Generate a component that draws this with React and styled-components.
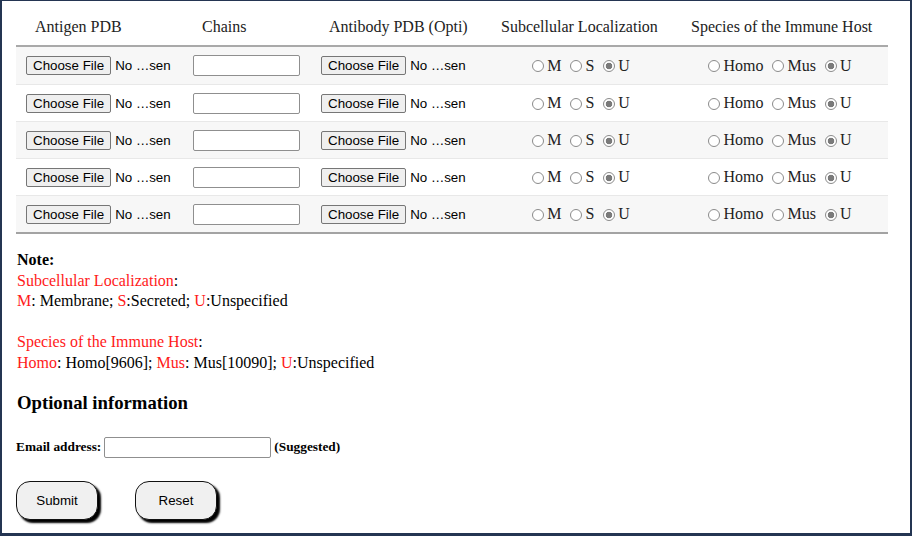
import React from "react";
import styled, { createGlobalStyle } from "styled-components";

const Global = createGlobalStyle`
  html, body { margin: 0; padding: 0; background: #fff; }
  body { font-family: "Liberation Serif", "Times New Roman", serif; color: #000; }
`;

const Frame = styled.div`
  box-sizing: border-box;
  width: 912px;
  height: 536px;
  border-style: solid;
  border-color: #243552;
  border-width: 1px 2px 3px 2px;
  padding: 0 22px 0 14px;
  overflow: hidden;
`;

const Table = styled.div`
  width: 872px;
  border-bottom: 2px solid #a3a3a3;
`;

const HeaderRow = styled.div`
  display: grid;
  grid-template-columns: 167px 127px 172px 190px 1fr;
  padding: 16px 0 9px 19px;
  border-bottom: 2px solid #a9a9a9;
  line-height: 19px;
  font-size: 16px;
  color: #222;
`;

const HeadCell = styled.div`
  white-space: nowrap;
`;

const Row = styled.div`
  display: grid;
  grid-template-columns: 167px 128px 179px 182px 216px;
  height: 37px;
  box-sizing: border-box;
  align-items: center;
  background: ${(p) => (p.$shade ? "#f7f7f7" : "#ffffff")};
  border-top: ${(p) => (p.$first ? "none" : "1px solid #e8e8e8")};
`;

const Cell = styled.div`
  display: flex;
  align-items: center;
  justify-content: ${(p) => (p.$center ? "center" : "flex-start")};
  padding-left: ${(p) => (p.$center ? "0" : "10px")};
  white-space: nowrap;
`;

const FileInput = styled.input.attrs({ type: "file" })`
  width: 145px;
  font-family: "Liberation Sans", Arial, sans-serif;
  font-size: 13.33px;
  color: #000;
  &::file-selector-button {
    font-family: "Liberation Sans", Arial, sans-serif;
    font-size: 13.33px;
    background: #efefef;
    border: 1px solid #767676;
    border-radius: 2px;
    padding: 1px 6px;
    margin-right: 4px;
    color: #000;
  }
`;

const TextInput = styled.input.attrs({ type: "text" })`
  box-sizing: border-box;
  width: ${(p) => p.$w || 107}px;
  height: 21px;
  border: 1px solid #8f8f8f;
  border-radius: 2px;
  padding: 1px 2px;
  font-family: "Liberation Sans", Arial, sans-serif;
  font-size: 13.33px;
  background: #fff;
  outline: none;
`;

const RadioGroup = styled.div`
  display: flex;
  align-items: center;
  gap: 9px;
  font-family: "Liberation Serif", "Times New Roman", serif;
  font-size: 16px;
  color: #222;
`;

const RadioLabel = styled.label`
  display: inline-flex;
  align-items: center;
  gap: 3px;
`;

const Radio = styled.input.attrs({ type: "radio" })`
  appearance: none;
  -webkit-appearance: none;
  margin: 1px 0 0 0;
  width: 12px;
  height: 12px;
  border: 1px solid #8b8b8b;
  border-radius: 50%;
  box-sizing: border-box;
  background: #fff;
  &:checked {
    background: radial-gradient(circle, #7a7a7a 0 3px, #fff 3.6px);
  }
`;

const Note = styled.div`
  margin-top: 16px;
  padding-left: 1px;
  font-size: 16px;
  line-height: 20.5px;
`;

const Bold = styled.span`
  font-weight: bold;
`;

const Red = styled.span`
  color: #ff1a1a;
`;

const Heading = styled.h3`
  margin: 19px 0 0 1px;
  font-size: 18.72px;
  line-height: 22px;
  font-weight: bold;
`;

const EmailRow = styled.div`
  margin: 22px 0 0 0;
  height: 22px;
  display: flex;
  align-items: center;
  gap: 3px;
  font-size: 13.33px;
  font-weight: bold;
`;

const Buttons = styled.div`
  margin: 23px 0 0 0;
  display: flex;
  gap: 37px;
`;

const PillButton = styled.button`
  box-sizing: border-box;
  width: 82px;
  height: 39px;
  border: 1.5px solid #111;
  border-radius: 14px;
  background: #f0f0f0;
  box-shadow: 3px 3px 2px #000;
  font-family: "Liberation Sans", Arial, sans-serif;
  font-size: 13.33px;
  color: #000;
`;

const rows = [0, 1, 2, 3, 4];

function Radios({ name, options }) {
  return (
    <RadioGroup>
      {options.map((o, i) => (
        <RadioLabel key={o}>
          <Radio name={name} defaultChecked={i === options.length - 1} />
          {o}
        </RadioLabel>
      ))}
    </RadioGroup>
  );
}

export default function App() {
  return (
    <>
      <Global />
      <Frame>
        <Table>
          <HeaderRow>
            <HeadCell>Antigen PDB</HeadCell>
            <HeadCell>Chains</HeadCell>
            <HeadCell>Antibody PDB (Opti)</HeadCell>
            <HeadCell>Subcellular Localization</HeadCell>
            <HeadCell>Species of the Immune Host</HeadCell>
          </HeaderRow>
          {rows.map((r) => (
            <Row key={r} $shade={r % 2 === 0} $first={r === 0}>
              <Cell>
                <FileInput />
              </Cell>
              <Cell>
                <TextInput />
              </Cell>
              <Cell>
                <FileInput />
              </Cell>
              <Cell $center>
                <Radios name={`loc${r}`} options={["M", "S", "U"]} />
              </Cell>
              <Cell $center>
                <Radios name={`sp${r}`} options={["Homo", "Mus", "U"]} />
              </Cell>
            </Row>
          ))}
        </Table>
        <Note>
          <Bold>Note:</Bold>
          <br />
          <Red>Subcellular Localization</Red>:
          <br />
          <Red>M</Red>: Membrane; <Red>S</Red>:Secreted; <Red>U</Red>:Unspecified
          <br />
          <br />
          <Red>Species of the Immune Host</Red>:
          <br />
          <Red>Homo</Red>: Homo[9606]; <Red>Mus</Red>: Mus[10090]; <Red>U</Red>:Unspecified
        </Note>
        <Heading>Optional information</Heading>
        <EmailRow>
          Email address:
          <TextInput $w={167} />
          (Suggested)
        </EmailRow>
        <Buttons>
          <PillButton>Submit</PillButton>
          <PillButton>Reset</PillButton>
        </Buttons>
      </Frame>
    </>
  );
}
